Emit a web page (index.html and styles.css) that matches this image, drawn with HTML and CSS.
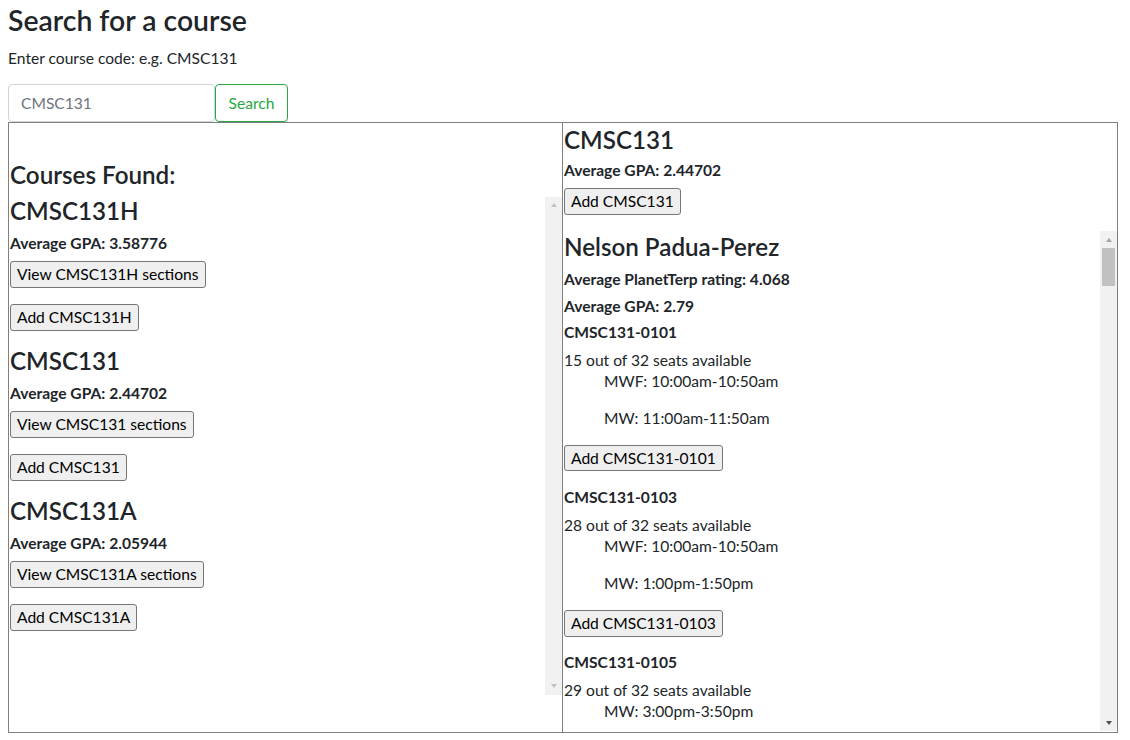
FILE: index.html
```html
<!DOCTYPE html>
<html lang="en">
<head>
<meta charset="utf-8">
<title>Search for a course</title>
<link rel="stylesheet" href="styles.css">
</head>
<body>
<div class="page">
  <h1 class="title">Search for a course</h1>
  <p class="hint">Enter course code: e.g. CMSC131</p>
  <form class="search-row">
    <input class="search-input" type="text" placeholder="CMSC131">
    <button class="search-btn" type="button">Search</button>
  </form>

  <div class="results">
    <div class="col col-left">
      <h4 class="found-title">Courses Found:</h4>
      <div class="scroller scroller-left">
        <div class="scroll-content">
          <div class="course">
            <h4 class="h4">CMSC131H</h4>
            <h6 class="h6">Average GPA: 3.58776</h6>
            <button class="btn">View CMSC131H sections</button>
            <button class="btn">Add CMSC131H</button>
          </div>
          <div class="course">
            <h4 class="h4">CMSC131</h4>
            <h6 class="h6">Average GPA: 2.44702</h6>
            <button class="btn">View CMSC131 sections</button>
            <button class="btn">Add CMSC131</button>
          </div>
          <div class="course">
            <h4 class="h4">CMSC131A</h4>
            <h6 class="h6">Average GPA: 2.05944</h6>
            <button class="btn">View CMSC131A sections</button>
            <button class="btn">Add CMSC131A</button>
          </div>
        </div>
        <div class="scrollbar scrollbar-idle">
          <span class="sb-btn sb-up"></span>
          <span class="sb-track"></span>
          <span class="sb-btn sb-down"></span>
        </div>
      </div>
    </div>

    <div class="col col-right">
      <h4 class="h4 detail-title">CMSC131</h4>
      <h6 class="h6">Average GPA: 2.44702</h6>
      <button class="btn">Add CMSC131</button>
      <div class="scroller scroller-right">
        <div class="scroll-content prof-list">
          <div class="prof">
            <h4 class="h4">Nelson Padua-Perez</h4>
            <h6 class="h6">Average PlanetTerp rating: 4.068</h6>
            <h6 class="h6 prof-gpa">Average GPA: 2.79</h6>
            <div class="section">
              <h6 class="h6">CMSC131-0101</h6>
              <div class="seats">15 out of 32 seats available</div>
              <div class="schedule">
                <p class="slot">MWF: 10:00am-10:50am</p>
                <p class="slot">MW: 11:00am-11:50am</p>
              </div>
              <button class="btn">Add CMSC131-0101</button>
            </div>
            <div class="section">
              <h6 class="h6">CMSC131-0103</h6>
              <div class="seats">28 out of 32 seats available</div>
              <div class="schedule">
                <p class="slot">MWF: 10:00am-10:50am</p>
                <p class="slot">MW: 1:00pm-1:50pm</p>
              </div>
              <button class="btn">Add CMSC131-0103</button>
            </div>
            <div class="section">
              <h6 class="h6">CMSC131-0105</h6>
              <div class="seats">29 out of 32 seats available</div>
              <div class="schedule">
                <p class="slot">MW: 3:00pm-3:50pm</p>
              </div>
            </div>
          </div>
        </div>
        <div class="scrollbar scrollbar-active">
          <span class="sb-btn sb-up"></span>
          <span class="sb-track"><span class="sb-thumb"></span></span>
          <span class="sb-btn sb-down"></span>
        </div>
      </div>
    </div>
  </div>
</div>
</body>
</html>
```
FILE: styles.css
```css
* { box-sizing: border-box; }

html, body {
  margin: 0;
  padding: 0;
  background: #ffffff;
}

body {
  font-family: "Lato", "Noto Sans", sans-serif;
  font-size: 15.6px;
  line-height: 21.3px;
  color: #212529;
}

.page {
  padding: 4px 0 0 8px;
}

.title {
  margin: 0 0 8px 0;
  font-size: 28.4px;
  line-height: 33.6px;
  font-weight: 600;
}

.hint {
  margin: 0 0 14.4px 0;
  line-height: 24px;
}

.search-row {
  display: flex;
  margin: 0;
  height: 38px;
}

.search-input {
  width: 207px;
  height: 38px;
  padding: 6px 12px;
  border: 1px solid #ced4da;
  border-radius: 4px;
  font-family: inherit;
  font-size: 15.6px;
  color: #495057;
  background: #ffffff;
  outline: none;
}

.search-input::placeholder {
  color: #6c757d;
  opacity: 1;
}

.search-btn {
  width: 73px;
  height: 38px;
  padding: 6px 12px;
  border: 1px solid #28a745;
  border-radius: 4px;
  background: #ffffff;
  color: #28a745;
  font-family: inherit;
  font-size: 15.6px;
  line-height: 24px;
}

.results {
  display: flex;
  width: 1110px;
  height: 611px;
  border: 1px solid #808080;
}

.col {
  display: flex;
  flex-direction: column;
  align-items: flex-start;
  padding-left: 1px;
  min-height: 0;
}

.col-left {
  width: 554px;
  border-right: 1px solid #808080;
}

.col-right {
  flex: 1;
}

.h4 {
  margin: 0 0 8px 0;
  font-size: 24.2px;
  line-height: 28.8px;
  font-weight: 600;
}

.h6 {
  margin: 0 0 8px 0;
  font-size: 15.6px;
  line-height: 19.2px;
  font-weight: 700;
}

.found-title {
  margin: 38px 0 7.2px 0;
  font-size: 24.2px;
  line-height: 28.8px;
  font-weight: 600;
}

.detail-title {
  margin-top: 3px;
  margin-bottom: 6px;
}

.prof-list {
  padding-top: 2px;
}

.prof-gpa {
  margin-bottom: 6px;
}

.btn {
  display: block;
  margin: 0 0 16.2px 0;
  padding: 2px 6px;
  border: 1px solid #767676;
  border-radius: 3px;
  background: #efefef;
  color: #000000;
  font-family: inherit;
  font-size: 15.6px;
  line-height: 20.8px;
}

.scroller {
  display: flex;
  align-self: stretch;
  overflow: hidden;
}

.scroller-left {
  height: 498px;
  margin-left: -1px;
}

.scroller-right {
  height: 500px;
  margin-left: -1px;
  margin-top: 0.4px;
}

.scroll-content {
  flex: 1;
  min-width: 0;
  padding-left: 1px;
  overflow: hidden;
}

.section {
  display: flex;
  flex-direction: column;
  align-items: flex-start;
}

.seats {
  line-height: 21.3px;
}

.schedule {
  margin: 0 0 15px 40px;
}

.slot {
  margin: 0 0 16px 0;
  line-height: 21.3px;
}

.slot:last-child {
  margin-bottom: 0;
}

/* hand-drawn scrollbars */
.scrollbar {
  width: 17px;
  flex-shrink: 0;
  display: flex;
  flex-direction: column;
  background: #f1f1f1;
}

.scrollbar-idle { --arrow-up: #c2c2c2; --arrow-down: #c2c2c2; }
.scrollbar-active { --arrow-up: #a3a3a3; --arrow-down: #505050; }

.sb-btn {
  height: 17px;
  flex-shrink: 0;
  display: flex;
  align-items: center;
  justify-content: center;
}

.sb-btn::before {
  content: "";
  width: 0;
  height: 0;
  border-left: 3.5px solid transparent;
  border-right: 3.5px solid transparent;
}

.sb-up::before { border-bottom: 4px solid var(--arrow-up); }
.sb-down::before { border-top: 4px solid var(--arrow-down); }

.sb-track {
  flex: 1;
  padding: 0 2px;
}

.sb-thumb {
  display: block;
  height: 38px;
  background: #c1c1c1;
}
```
